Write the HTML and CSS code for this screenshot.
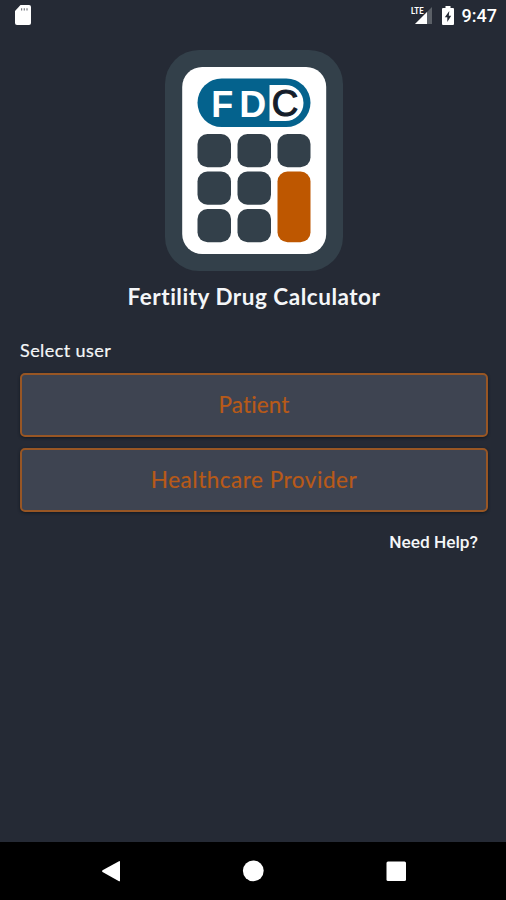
FILE: index.html
```html
<!DOCTYPE html>
<html lang="en">
<head>
<meta charset="utf-8">
<meta name="viewport" content="width=device-width, initial-scale=1">
<title>Fertility Drug Calculator</title>
<link rel="stylesheet" href="styles.css">
</head>
<body>
<div class="screen">
  <header class="status">
    <svg class="sd" width="16" height="20" viewBox="0 0 16 20"><path d="M5.5 0H14Q16 0 16 2V18Q16 20 14 20H2Q0 20 0 18V6Z" fill="#fff"/><path d="M6 3.2h1.2v2.3H6zM8.7 3.2h1.2v2.3H8.7zM11.4 3.2h1.2v2.3h-1.2z" fill="#777b80"/></svg>
    <div class="indicators">
      <svg class="signal" width="24" height="20" viewBox="0 0 24 20"><path d="M22 2V19H5Z" fill="#5b6067"/><path d="M17 7V19H5Z" fill="#fff"/><text x="1" y="8.7" class="lte" textLength="12.5" lengthAdjust="spacingAndGlyphs">LTE</text></svg>
      <svg class="battery" width="12" height="19" viewBox="0 0 12 19"><path d="M3.5 0h5v2H11q1 0 1 1v15q0 1-1 1H1q-1 0-1-1V3q0-1 1-1h2.5z" fill="#fff"/><path d="M7.3 5L2.8 11.2H5.3V16L9.2 9.7H6.8Z" fill="#252a35"/></svg>
      <span class="time">9:47</span>
    </div>
  </header>
  <main class="content">
    <svg class="logo" width="178" height="221" viewBox="164.5 50 178 221" role="img" aria-label="FDC">
      <rect x="164.5" y="50" width="178" height="221" rx="34" fill="#33404a"/>
      <rect x="181.7" y="67" width="144" height="187" rx="20" fill="#fff"/>
      <rect x="197" y="78.5" width="113" height="48.5" rx="24.2" fill="#04628d"/>
      <path d="M269 85H285A18 18 0 0 1 285 121H269Z" fill="#fff"/>
      <text class="letter" x="210.8" y="116.6" textLength="22" lengthAdjust="spacingAndGlyphs">F</text>
      <text class="letter" x="238.7" y="116.6" textLength="27" lengthAdjust="spacingAndGlyphs">D</text>
      <text class="letter dark" x="271.3" y="116.2" textLength="26.5" lengthAdjust="spacingAndGlyphs">C</text>
      <g fill="#33404a">
        <rect x="197" y="134" width="33.5" height="33.2" rx="10"/><rect x="237" y="134" width="33.5" height="33.2" rx="10"/><rect x="277" y="134" width="33" height="33.2" rx="10"/>
        <rect x="197" y="171.5" width="33.5" height="33.2" rx="10"/><rect x="237" y="171.5" width="33.5" height="33.2" rx="10"/>
        <rect x="197" y="209" width="33.5" height="33.2" rx="10"/><rect x="237" y="209" width="33.5" height="33.2" rx="10"/>
      </g>
      <rect x="277" y="171.5" width="33" height="70.7" rx="10" fill="#be5700"/>
    </svg>
    <h1 class="title">Fertility Drug Calculator</h1>
    <p class="label">Select user</p>
    <button class="choice patient">Patient</button>
    <button class="choice provider">Healthcare Provider</button>
    <a class="help">Need Help?</a>
  </main>
  <nav class="navbar">
    <svg width="506" height="58" viewBox="0 0 506 58" fill="#fff"><path d="M102.5 28.2L119 19.2Q120 18.8 120 20V38.5Q120 39.7 119 39.2L102.5 30Q101.5 29.1 102.5 28.2Z"/><circle cx="253.3" cy="28.8" r="10.4"/><rect x="386.5" y="19.5" width="19.5" height="19.5" rx="1.5"/></svg>
  </nav>
</div>
</body>
</html>
```

FILE: styles.css
```css
* { box-sizing: border-box; }
body { margin: 0; background: #252a35; }
.screen {
  width: 506px;
  height: 900px;
  display: flex;
  flex-direction: column;
  background: #252a35;
  color: #f4f6f8;
  font-family: Lato, "Open Sans", sans-serif;
  font-variant-ligatures: none;
  overflow: hidden;
}
.status {
  height: 32px;
  display: flex;
  justify-content: space-between;
  align-items: flex-start;
  padding: 5px 9px 0 15px;
}
.indicators { display: flex; align-items: flex-start; }
.battery { margin: 1px 8px 0 8px; }
.lte { font: 700 9px Roboto, sans-serif; fill: #fff; }
.time { font: 500 18px/22px Roboto, sans-serif; color: #fff; }
.content {
  flex: 1;
  display: flex;
  flex-direction: column;
  padding: 18px 18px 0 20px;
}
.logo { align-self: center; flex: none; }
.letter { font: 700 36.5px "Liberation Sans", sans-serif; fill: #fff; }
.dark { font-weight: 400; fill: #141d2b; stroke: #141d2b; stroke-width: 1.2px; }
.title {
  align-self: center;
  margin: 12px 0 0;
  font-size: 22.5px;
  line-height: 28px;
  font-weight: 700;
  letter-spacing: .52px;
  white-space: nowrap;
}
.label {
  margin: 27px 0 11px;
  font-size: 18px;
  line-height: 24px;
  letter-spacing: .42px;
  -webkit-text-stroke: .2px currentColor;
}
.choice {
  height: 64px;
  flex: none;
  margin: 0 0 11px;
  padding: 0 0 1px;
  border: 2px solid #985624;
  border-radius: 5px;
  background: #3e4451;
  color: #b85a18;
  font: 400 22.5px/28px Lato, sans-serif;
  font-variant-ligatures: none;
  -webkit-text-stroke: .2px currentColor;
  box-shadow: 0 1px 3px #111922;
}
.patient { letter-spacing: .15px; }
.provider { letter-spacing: .53px; }
.help {
  align-self: flex-end;
  margin: 7px 10px 0 0;
  font: 500 17.3px/24px Roboto, sans-serif;
  color: #f4f6f8;
}
.navbar { height: 58px; flex: none; background: #000; }
.navbar svg { display: block; }
```
